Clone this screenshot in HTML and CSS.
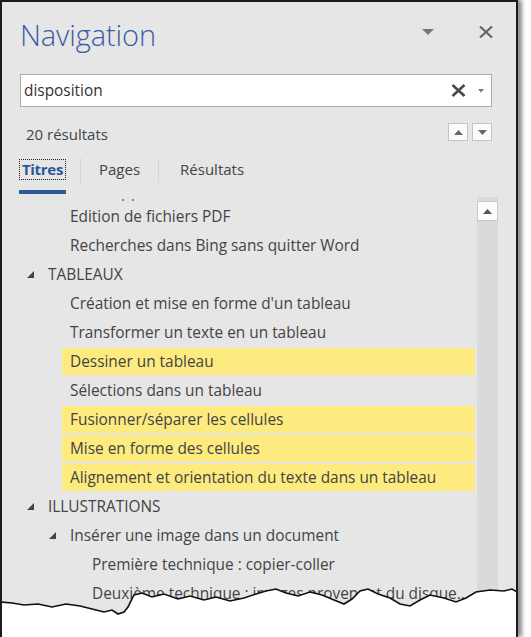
FILE: index.html
```html
<!DOCTYPE html>
<html lang="fr">
<head>
  <meta charset="UTF-8">
  <meta name="viewport" content="width=device-width, initial-scale=1.0">
  <title>Navigation</title>
  <link rel="stylesheet" href="styles.css">
</head>
<body>
  <div class="panel">
    <!-- Pane title with menu and close buttons -->
    <div class="header">
      <h1 class="title">Navigation</h1>
      <svg class="pane-menu" width="12" height="6" viewBox="0 0 12 6"><path d="M0 0h12L6 6z" fill="#777"/></svg>
      <svg class="pane-close" width="14" height="12" viewBox="0 0 14 12"><path d="M1 0.5l12 11M13 0.5l-12 11" stroke="#666" stroke-width="2.2"/></svg>
    </div>

    <!-- Search box -->
    <div class="search">
      <span class="search-text">disposition</span>
      <svg class="search-clear" width="15" height="13" viewBox="0 0 15 13"><path d="M1.5 1l12 11M13.5 1l-12 11" stroke="#4a4a4a" stroke-width="2.6"/></svg>
      <svg class="search-drop" width="6" height="4" viewBox="0 0 6 4"><path d="M0 0h6L3 3.5z" fill="#777"/></svg>
    </div>

    <!-- Result count and previous / next -->
    <div class="results">
      <span class="count">20 résultats</span>
      <div class="steps">
        <div class="step"><svg width="9" height="5" viewBox="0 0 9 5"><path d="M0 5h9L4.5 0z" fill="#666"/></svg></div>
        <div class="step"><svg width="9" height="5" viewBox="0 0 9 5"><path d="M0 0h9L4.5 5z" fill="#666"/></svg></div>
      </div>
    </div>

    <!-- Tabs -->
    <div class="tabs">
      <div class="tab tab-active"><span class="tab-focus">Titres</span></div>
      <div class="tab-sep"></div>
      <div class="tab">Pages</div>
      <div class="tab-sep tab-sep-wide"></div>
      <div class="tab">Résultats</div>
    </div>

    <!-- Headings tree -->
    <div class="tree">
      <div class="tree-list">
        <!-- descenders of the row scrolled out above -->
        <div class="row-tail"><i></i><i></i></div>
        <div class="row l2">Edition de fichiers PDF</div>
        <div class="row l2">Recherches dans Bing sans quitter Word</div>
        <div class="row l1"><span class="twisty"></span>TABLEAUX</div>
        <div class="row l2">Création et mise en forme d'un tableau</div>
        <div class="row l2">Transformer un texte en un tableau</div>
        <div class="row l2 hit">Dessiner un tableau</div>
        <div class="row l2">Sélections dans un tableau</div>
        <div class="row l2 hit">Fusionner/séparer les cellules</div>
        <div class="row l2 hit">Mise en forme des cellules</div>
        <div class="row l2 hit">Alignement et orientation du texte dans un tableau</div>
        <div class="row l1"><span class="twisty"></span>ILLUSTRATIONS</div>
        <div class="row l2"><span class="twisty"></span>Insérer une image dans un document</div>
        <div class="row l3">Première technique : copier-coller</div>
        <div class="row l3">Deuxième technique : images provenant du disque…</div>
      </div>
      <div class="scrollbar">
        <div class="scroll-up"><svg width="9" height="5" viewBox="0 0 9 5"><path d="M0 5h9L4.5 0z" fill="#555"/></svg></div>
      </div>
    </div>

    <!-- Torn paper edge over the bottom of the pane -->
    <svg class="tear" width="531" height="60" viewBox="0 0 531 60">
      <defs>
        <filter id="soft" x="-5%" y="-50%" width="110%" height="200%">
          <feGaussianBlur stdDeviation="1.6"/>
        </filter>
      </defs>
      <path d="M0 17 L12 18 L24 20 L38 19 L52 22 L66 19 L80 21 L92 24 L104 27 L112 25 L118 29 L124 27 L128 22 L134 10 L142 8 L152 12 L164 9 L178 14 L190 11 L204 15 L216 12 L230 16 L244 13 L256 9 L266 6 L276 4 L286 8 L298 11 L310 7 L322 10 L334 15 L344 19 L352 14 L360 6 L368 4 L378 9 L390 13 L400 19 L410 21 L420 15 L430 10 L444 13 L456 17 L466 13 L476 7 L490 5 L504 6 L512 4 L517 7 L518 22"
            fill="none" stroke="#000" stroke-opacity="0.55" stroke-width="4" transform="translate(1 4)" filter="url(#soft)"/>
      <path d="M0 17 L12 18 L24 20 L38 19 L52 22 L66 19 L80 21 L92 24 L104 27 L112 25 L118 29 L124 27 L128 22 L134 10 L142 8 L152 12 L164 9 L178 14 L190 11 L204 15 L216 12 L230 16 L244 13 L256 9 L266 6 L276 4 L286 8 L298 11 L310 7 L322 10 L334 15 L344 19 L352 14 L360 6 L368 4 L378 9 L390 13 L400 19 L410 21 L420 15 L430 10 L444 13 L456 17 L466 13 L476 7 L490 5 L504 6 L512 4 L517 7 L531 7 L531 60 L0 60 Z"
            fill="#fff"/>
      <path d="M0 17 L12 18 L24 20 L38 19 L52 22 L66 19 L80 21 L92 24 L104 27 L112 25 L118 29 L124 27 L128 22 L134 10 L142 8 L152 12 L164 9 L178 14 L190 11 L204 15 L216 12 L230 16 L244 13 L256 9 L266 6 L276 4 L286 8 L298 11 L310 7 L322 10 L334 15 L344 19 L352 14 L360 6 L368 4 L378 9 L390 13 L400 19 L410 21 L420 15 L430 10 L444 13 L456 17 L466 13 L476 7 L490 5 L504 6 L512 4 L517 7 L518 22"
            fill="none" stroke="#111" stroke-width="1.6"/>
    </svg>
  </div>
</body>
</html>
```

FILE: styles.css
```css
/* Page */
body {
  margin: 0;
  background: #fff;
  font-family: "Open Sans", "Noto Sans", sans-serif;
  color: #444;
  overflow: hidden;
}

/* Navigation pane */
.panel {
  position: relative;
  width: 514px;
  height: 635px;
  background: #e6e6e6;
  border: 2px solid #1c1c1c;
  border-bottom: none;
  box-shadow: 4px 0 4px rgba(0, 0, 0, 0.45);
  overflow: hidden;
}

/* Title row */
.header {
  display: flex;
  align-items: center;
  height: 40px;
  margin-top: 13px;
  padding-left: 18px;
  padding-right: 23px;
}

.title {
  margin: 0;
  flex: 1;
  font-size: 29px;
  font-weight: 300;
  line-height: 40px;
  color: #3b5ca6;
  letter-spacing: -0.1px;
}

.pane-menu {
  margin-right: 45px;
  margin-top: -6px;
}

.pane-close {
  margin-top: -6px;
}

/* Search box */
.search {
  display: flex;
  align-items: center;
  height: 31px;
  width: 470px;
  margin: 19px 0 0 18px;
  background: #fff;
  border: 1px solid #ababab;
}

.search-text {
  flex: 1;
  padding-left: 3px;
  font-size: 15.4px;
  color: #333;
}

.search-clear {
  margin-right: 12px;
}

.search-drop {
  margin-right: 7px;
}

/* Result count */
.results {
  display: flex;
  align-items: center;
  height: 18px;
  margin: 16px 24px 0 24px;
}

.count {
  flex: 1;
  font-size: 15px;
  padding-top: 3px;
}

.steps {
  display: flex;
  gap: 4px;
}

.step {
  display: flex;
  align-items: center;
  justify-content: center;
  width: 18px;
  height: 16px;
  background: #fbfbfb;
  border: 1px solid #c4c4c4;
}

/* Tabs */
.tabs {
  display: flex;
  align-items: flex-start;
  height: 35px;
  margin: 18px 0 0 17px;
}

.tab {
  font-size: 15px;
  line-height: 21px;
  color: #444;
}

.tab-active {
  width: 47px;
  height: 35px;
  box-sizing: border-box;
  border-bottom: 4px solid #2b579a;
}

.tab-focus {
  display: block;
  height: 21px;
  box-sizing: border-box;
  outline: 1px dotted #222;
  outline-offset: -1px;
  text-align: center;
  font-weight: 700;
  color: #2b579a;
  letter-spacing: -0.3px;
}

.tab-sep {
  width: 1px;
  height: 25px;
  margin: -1px 18px 0 14px;
  background: #d6d6d6;
}

.tab-sep-wide {
  margin: -1px 21px 0 18px;
}

/* Tree of headings */
.tree {
  display: flex;
  height: 420px;
  margin-top: 3px;
  padding-right: 18px;
}

.tree-list {
  flex: 1;
  display: flex;
  flex-direction: column;
  gap: 2px;
  overflow: hidden;
}

.row-tail {
  display: flex;
  gap: 8px;
  height: 2px;
  margin: 2px 0 0 120px;
}

.row-tail i {
  width: 2px;
  height: 2px;
  background: #888;
}

.row {
  flex: none;
  height: 27px;
  margin: 0 2px 0 0;
  padding-left: 8px;
  font-size: 15.4px;
  line-height: 27px;
  white-space: nowrap;
}

.l1 {
  margin-left: 38px;
}

.l2 {
  margin-left: 60px;
}

.l3 {
  margin-left: 82px;
}

.hit {
  background: #fdeb80;
}

.twisty {
  display: inline-block;
  width: 21px;
  height: 27px;
  margin-left: -21px;
  vertical-align: top;
  position: relative;
}

.twisty::before {
  content: "";
  position: absolute;
  left: 0;
  top: 10px;
  border-style: solid;
  border-width: 0 0 7px 7px;
  border-color: transparent transparent #444 transparent;
}

/* Scrollbar */
.scrollbar {
  width: 21px;
  background: #dadada;
}

.scroll-up {
  display: flex;
  align-items: center;
  justify-content: center;
  height: 18px;
  margin-top: 4px;
  background: #fcfcfc;
  border: 1px solid #c8c8c8;
}

/* Torn edge */
.tear {
  position: absolute;
  left: -2px;
  top: 583px;
}
```
